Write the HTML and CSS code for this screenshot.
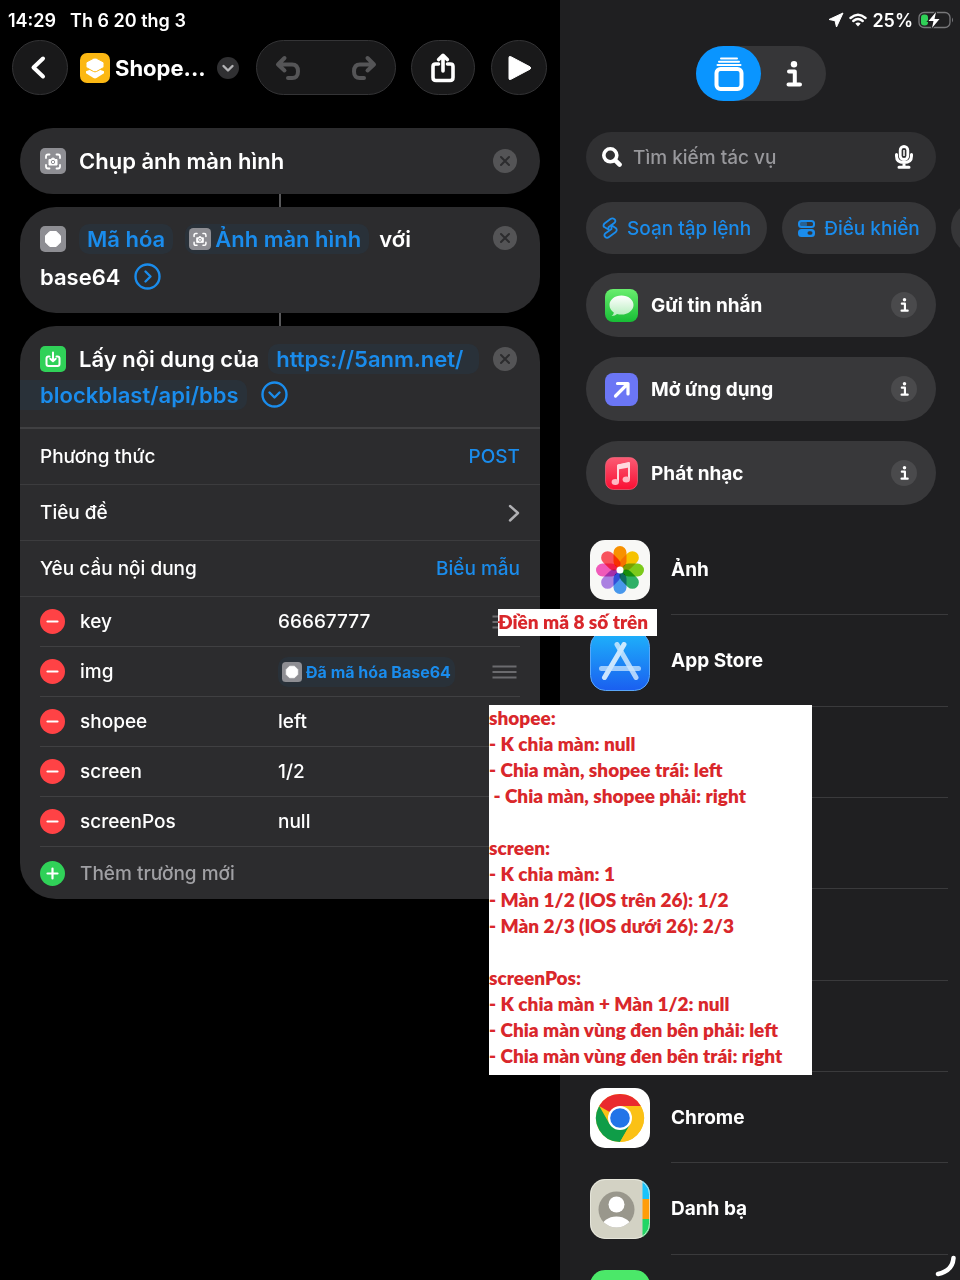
FILE: index.html
```
<!DOCTYPE html>
<html lang="vi">
<head>
    <meta charset="UTF-8" />
    <meta name="viewport" content="width=device-width, initial-scale=1.0" />
    <title>Shope...</title>
    <link rel="stylesheet" href="styles.css">
</head>
<body>
    <!-- Shared icons -->
    <svg class="sprite" aria-hidden="true">
        <symbol id="i-close" viewBox="0 0 24 24">
            <circle cx="12" cy="12" r="12" fill="#545456" />
            <path d="M8 8l8 8M16 8l-8 8" stroke="#2c2c2e" stroke-width="2" stroke-linecap="round" />
        </symbol>
        <symbol id="i-shot" viewBox="0 0 26 26">
            <rect width="26" height="26" rx="5" fill="#8e8e93" />
            <path d="M6 10V8.500Q6 6.500 8 6.500H9.500M16.500 6.500H18Q20 6.500 20 8.500V10M20 17V18.500Q20 20.500 18 20.500H16.500M9.500 20.500H8Q6 20.500 6 18.500V17" fill="none" stroke="#fff" stroke-width="1.800" stroke-linecap="round" />
            <path d="M9 11.500h2l1-1.300h2l1 1.300h2v5.500H9z" fill="#fff" stroke="#fff" stroke-linejoin="round" />
            <circle cx="13" cy="14" r="1.700" fill="none" stroke="#8e8e93" />
        </symbol>
        <symbol id="i-code" viewBox="0 0 26 26">
            <rect width="26" height="26" rx="5" fill="#8e8e93" />
            <path d="M9.800 5.500h6.400l4.300 4.300v6.400L16.200 20.500H9.800L5.500 16.200V9.800z" fill="#fff" stroke="#fff" stroke-linejoin="round" />
        </symbol>
        <symbol id="i-minus" viewBox="0 0 25 25">
            <circle cx="12.500" cy="12.500" r="12.500" fill="#ff4245" />
            <path d="M7.500 12.500h10" stroke="#fff" stroke-width="2.200" stroke-linecap="round" />
        </symbol>
        <symbol id="i-grip" viewBox="0 0 25 14">
            <path d="M.5 1.500h24M.5 7h24M.5 12.500h24" stroke="#6b6b6e" stroke-width="1.800" />
        </symbol>
        <symbol id="i-info" viewBox="0 0 16 26">
            <circle cx="8" cy="3.200" r="3.200" fill="currentColor" />
            <path d="M3 10.500h5.800v12.500M2.500 23.500h11.500" fill="none" stroke="currentColor" stroke-width="4" stroke-linecap="round" stroke-linejoin="round" />
        </symbol>
    </svg>

    <div class="screen">
        <!-- Shortcut editor -->
        <main class="editor">
            <div class="status">
                <span>14:29</span>
                <span>Th 6 20 thg 3</span>
            </div>

            <header class="toolbar">
                <button class="round-btn back" aria-label="Back">
                    <svg width="56" height="55" viewBox="0 0 56 55"><path d="M31 18.500l-9.500 9 9.500 9" fill="none" stroke="#fff" stroke-width="4" stroke-linecap="round" stroke-linejoin="round" /></svg>
                </button>
                <h1 class="title">
                    <svg width="30" height="30" viewBox="0 0 30 30">
                        <rect width="30" height="30" rx="7" fill="#fcb813" />
                        <path d="M15 15l9 3.300v2L16.500 25q-1.500.8-3 0L6 20.300v-2z" fill="#fff" />
                        <path d="M13.500 5.300q1.500-.7 3 0L23 8.700q1 .6 1 1.600v3q0 1-1 1.600l-6.500 3.600q-1.500.7-3 0L7 14.900q-1-.6-1-1.600v-3q0-1 1-1.600z" fill="#fff" stroke="#fcb813" />
                    </svg>
                    Shope...
                </h1>
                <button class="menu-btn" aria-label="Menu">
                    <svg width="22" height="22" viewBox="0 0 22 22"><path d="M6.500 9l4.500 4.500L15.500 9" fill="none" stroke="#b4b4b6" stroke-width="2.400" stroke-linecap="round" stroke-linejoin="round" /></svg>
                </button>
                <div class="history">
                    <button aria-label="Undo">
                        <svg width="26" height="26" viewBox="0 0 26 26"><path d="M9.500 3L3 9.500l6.500 6M4 9.500h13Q23 9.500 23 16.500T16.500 23H13" fill="none" stroke="#555557" stroke-width="4" stroke-linecap="round" stroke-linejoin="round" /></svg>
                    </button>
                    <button aria-label="Redo">
                        <svg width="26" height="26" viewBox="0 0 26 26"><path d="M16.500 3L23 9.500l-6.500 6M22 9.500H9Q3 9.500 3 16.500T9.500 23H13" fill="none" stroke="#555557" stroke-width="4" stroke-linecap="round" stroke-linejoin="round" /></svg>
                    </button>
                </div>
                <button class="round-btn share" aria-label="Share">
                    <svg width="26" height="30" viewBox="0 0 26 30"><path d="M8.500 11H5.500Q3 11 3 13.500V24.500Q3 27.500 6 27.500H20Q23 27.500 23 24.500V13.500Q23 11 20.500 11H17.500M13 18V3M8.700 6.500L13 2.300l4.300 4.200" fill="none" stroke="#fff" stroke-width="3.600" stroke-linecap="round" stroke-linejoin="round" /></svg>
                </button>
                <button class="round-btn play" aria-label="Play">
                    <svg width="26" height="28" viewBox="0 0 26 28"><path d="M3 3.500v21q0 1.500 1.500 1L24 15.200q1.500-1.200 0-2.400L4.500 2.500q-1.500-.5-1.500 1z" fill="#fff" stroke="#fff" stroke-linejoin="round" /></svg>
                </button>
            </header>

            <section class="actions">
                <article class="card">
                    <div class="card-head">
                        <p><svg class="app"><use href="#i-shot" /></svg>Chụp ảnh màn hình</p>
                        <button class="close" aria-label="Close"><svg><use href="#i-close" /></svg></button>
                    </div>
                </article>

                <div class="link"></div>

                <article class="card">
                    <div class="card-head two-line">
                        <p><svg class="app"><use href="#i-code" /></svg><span class="token">Mã hóa</span><span class="token with-icon"><svg><use href="#i-shot" /></svg>Ảnh màn hình</span>với<br />base64<button class="expand" aria-label="Expand"><svg viewBox="0 0 27 27"><circle cx="13.500" cy="13.500" r="12" /><path d="M11.500 8.500l5 5-5 5" /></svg></button></p>
                        <button class="close" aria-label="Close"><svg><use href="#i-close" /></svg></button>
                    </div>
                </article>

                <div class="link"></div>

                <article class="card">
                    <div class="card-head request">
                        <p><svg class="app" viewBox="0 0 26 26"><rect width="26" height="26" rx="5" fill="#30d158" /><path d="M9.500 10.500H8.500Q6.500 10.500 6.500 12.500V18Q6.500 20 8.500 20H17.500Q19.500 20 19.500 18V12.500Q19.500 10.500 17.500 10.500H16.500M13 6.500V15M10.300 12.700L13 15.300l2.700-2.600" fill="none" stroke="#fff" stroke-width="2" stroke-linecap="round" stroke-linejoin="round" /></svg>Lấy nội dung của<span class="token url">https://5anm.net/</span><br /><span class="token url-rest">blockblast/api/bbs</span><button class="expand" aria-label="Collapse"><svg viewBox="0 0 27 27"><circle cx="13.500" cy="13.500" r="12" /><path d="M8.500 11.500l5 5 5-5" /></svg></button></p>
                        <button class="close" aria-label="Close"><svg><use href="#i-close" /></svg></button>
                    </div>

                    <div class="option">
                        <label for="method">Phương thức</label>
                        <select id="method"><option>POST</option></select>
                    </div>
                    <div class="option">
                        <span>Tiêu đề</span>
                        <svg width="12" height="18" viewBox="0 0 12 18"><path d="M2 2l8 7-8 7.500" fill="none" stroke="#b0b0b3" stroke-width="2.400" stroke-linecap="round" stroke-linejoin="round" /></svg>
                    </div>
                    <div class="option">
                        <label for="body-type">Yêu cầu nội dung</label>
                        <select id="body-type"><option>Biểu mẫu</option></select>
                    </div>

                    <ul class="fields">
                        <li>
                            <button aria-label="Remove"><svg><use href="#i-minus" /></svg></button>
                            <input value="key" aria-label="Key" />
                            <input value="66667777" aria-label="Value" />
                            <svg class="grip"><use href="#i-grip" /></svg>
                        </li>
                        <li>
                            <button aria-label="Remove"><svg><use href="#i-minus" /></svg></button>
                            <input value="img" aria-label="Key" />
                            <span class="token small"><svg><use href="#i-code" /></svg>Đã mã hóa Base64</span>
                            <svg class="grip"><use href="#i-grip" /></svg>
                        </li>
                        <li>
                            <button aria-label="Remove"><svg><use href="#i-minus" /></svg></button>
                            <input value="shopee" aria-label="Key" />
                            <input value="left" aria-label="Value" />
                            <svg class="grip"><use href="#i-grip" /></svg>
                        </li>
                        <li>
                            <button aria-label="Remove"><svg><use href="#i-minus" /></svg></button>
                            <input value="screen" aria-label="Key" />
                            <input value="1/2" aria-label="Value" />
                            <svg class="grip"><use href="#i-grip" /></svg>
                        </li>
                        <li>
                            <button aria-label="Remove"><svg><use href="#i-minus" /></svg></button>
                            <input value="screenPos" aria-label="Key" />
                            <input value="null" aria-label="Value" />
                            <svg class="grip"><use href="#i-grip" /></svg>
                        </li>
                    </ul>
                    <button class="add">
                        <svg viewBox="0 0 25 25"><circle cx="12.500" cy="12.500" r="12.500" fill="#30d158" /><path d="M7.500 12.500h10M12.500 7.500v10" stroke="#fff" stroke-width="2.200" stroke-linecap="round" /></svg>
                        Thêm trường mới
                    </button>
                </article>
            </section>
        </main>

        <!-- Action library -->
        <aside class="library">
            <div class="status status-right">
                <svg width="16" height="16" viewBox="0 0 16 16"><path d="M15 1L1 7.500l6 1.200L8.500 15z" fill="#fff" stroke="#fff" stroke-linejoin="round" /></svg>
                <svg width="18" height="14" viewBox="0 0 18 14"><path d="M1.500 5Q9-1.500 16.500 5M4.300 8Q9 4 13.700 8" fill="none" stroke="#fff" stroke-width="2.400" stroke-linecap="round" /><path d="M9 13.500L6.300 10.500Q9 8.500 11.700 10.500z" fill="#fff" /></svg>
                <span>25%</span>
                <svg class="battery" width="36" height="18" viewBox="0 0 36 18">
                    <rect x="1" y="1.500" width="31" height="15" rx="5" fill="none" stroke="#77777a" stroke-width="1.300" />
                    <path d="M34 6.500q2 2.500 0 5z" fill="#77777a" />
                    <rect x="3" y="3.500" width="7" height="11" rx="3" fill="#30d158" />
                    <path d="M18 1L10.500 10H15.500L14 17L21.500 8H16.500z" fill="#fff" stroke="#1f1f21" stroke-width="2" paint-order="stroke" />
                </svg>
            </div>

            <div class="segmented">
                <button class="active" aria-label="Actions">
                    <svg width="30" height="34" viewBox="0 0 30 34"><rect x="2.500" y="12" width="25" height="20" rx="4" fill="none" stroke="#fff" stroke-width="4" /><path d="M7 1.500h16M5 4.800h20M3.500 8h23" stroke="#fff" stroke-width="2" stroke-linecap="round" /></svg>
                </button>
                <button aria-label="Info"><svg width="16" height="26"><use href="#i-info" /></svg></button>
            </div>

            <div class="search">
                <svg width="20" height="20" viewBox="0 0 20 20"><circle cx="8.300" cy="8.300" r="6.500" fill="none" stroke="#fff" stroke-width="3.600" /><path d="M13.300 13.300l4.300 4.300" stroke="#fff" stroke-width="4.500" stroke-linecap="round" /></svg>
                <input type="search" placeholder="Tìm kiếm tác vụ" aria-label="Tìm kiếm tác vụ" />
                <svg width="18" height="24" viewBox="0 0 18 24"><rect x="5.200" y="1.500" width="7.600" height="13" rx="3.800" fill="none" stroke="#fff" stroke-width="2.800" /><path d="M9 5v6" stroke="#fff" stroke-width="1.500" /><path d="M1.500 9.500v1.500Q1.500 17.500 9 17.500T16.500 11V9.500M9 18v3.500M4 22.300h10" fill="none" stroke="#fff" stroke-width="3" stroke-linecap="round" /></svg>
            </div>

            <div class="chips">
                <button>
                    <svg width="16" height="22" viewBox="0 0 16 22" fill="none" stroke="#1a8cec" stroke-width="1.800" stroke-linejoin="round"><path d="M6.500 12.500L1.800 9.800Q1 8 2.500 6.500L8.500 2Q10.500.8 12.500 2.200 14.300 4 12.500 5.800L6.500 10.200z" /><path d="M9.500 8.200L14 11.200Q15.500 13 13.800 15L7 20Q5 21.500 3.200 20 1.500 18 3.500 16.200L9.500 12z" /></svg>
                    Soạn tập lệnh
                </button>
                <button>
                    <svg width="17" height="17" viewBox="0 0 17 17"><rect x="1" y="1" width="15" height="6" rx="2.500" fill="none" stroke="#1a8cec" stroke-width="2" /><rect x="1" y="1" width="8" height="6" rx="2.500" fill="#1a8cec" opacity=".5" /><rect x="1" y="10" width="15" height="6" rx="2.500" fill="#1a8cec" stroke="#1a8cec" stroke-width="2" /><rect x="9.500" y="11.300" width="5" height="3.400" rx="1.700" fill="#363638" /></svg>
                    Điều khiển
                </button>
                <button></button>
            </div>

            <div class="suggestions">
                <div class="suggestion">
                    <svg width="33" height="33" viewBox="0 0 33 33">
                        <defs>
                            <linearGradient id="g-msg" x2="0" y2="1"><stop stop-color="#69ee6e" /><stop offset="1" stop-color="#17bd35" /></linearGradient>
                            <linearGradient id="g-bubble" x2="0" y2="1"><stop stop-color="#fff" /><stop offset="1" stop-color="#b6edbd" /></linearGradient>
                        </defs>
                        <rect width="33" height="33" rx="8" fill="url(#g-msg)" />
                        <path d="M16.500 6.500C9.800 6.500 4.500 10.700 4.500 16C4.500 19.200 6.200 21.700 8.800 23.400C8.800 25 7.800 26 6.500 27C8.800 27 10.800 26.200 12 25C13.400 25.400 15 25.600 16.500 25.600C23.200 25.600 28.500 21.300 28.500 16C28.500 10.700 23.200 6.500 16.500 6.500z" fill="url(#g-bubble)" />
                    </svg>
                    <span>Gửi tin nhắn</span>
                    <button aria-label="Info"><svg><use href="#i-info" /></svg></button>
                </div>
                <div class="suggestion">
                    <svg width="33" height="33" viewBox="0 0 33 33"><rect width="33" height="33" rx="8" fill="#6b76f5" /><path d="M10.500 23L22.500 11M12.500 10.500h10.500v10.500" fill="none" stroke="#fff" stroke-width="3.200" stroke-linecap="round" stroke-linejoin="round" /></svg>
                    <span>Mở ứng dụng</span>
                    <button aria-label="Info"><svg><use href="#i-info" /></svg></button>
                </div>
                <div class="suggestion">
                    <svg width="33" height="33" viewBox="0 0 33 33">
                        <defs><linearGradient id="g-music" x2="0" y2="1"><stop stop-color="#fb5b74" /><stop offset="1" stop-color="#fa0f33" /></linearGradient></defs>
                        <rect x=".5" y=".5" width="32" height="32" rx="8" fill="url(#g-music)" stroke="#fd6d82" stroke-opacity=".6" />
                        <path d="M13 25V8.500L24 6V22" fill="none" stroke="#ffd9df" stroke-width="2" stroke-linejoin="round" />
                        <path d="M13 7.500L24 5.500v5l-11 2z" fill="#ffd9df" />
                        <ellipse cx="10.300" cy="25" rx="3.700" ry="3" fill="#ffb9c4" />
                        <ellipse cx="21.300" cy="22.500" rx="3.700" ry="3" fill="#ffb9c4" />
                    </svg>
                    <span>Phát nhạc</span>
                    <button aria-label="Info"><svg><use href="#i-info" /></svg></button>
                </div>
            </div>

            <nav class="apps">
                <a href="#">
                    <svg viewBox="0 0 60 60">
                        <rect width="60" height="60" rx="15" fill="#f8f8f6" />
                        <g class="petals">
                            <rect x="23.500" y="6" width="13" height="22" rx="6.500" fill="#ff9500" />
                            <rect x="23.500" y="6" width="13" height="22" rx="6.500" fill="#fdc800" transform="rotate(45 30 30)" />
                            <rect x="23.500" y="6" width="13" height="22" rx="6.500" fill="#7fd01c" transform="rotate(90 30 30)" />
                            <rect x="23.500" y="6" width="13" height="22" rx="6.500" fill="#2fb56a" transform="rotate(135 30 30)" />
                            <rect x="23.500" y="6" width="13" height="22" rx="6.500" fill="#4a9cf5" transform="rotate(180 30 30)" />
                            <rect x="23.500" y="6" width="13" height="22" rx="6.500" fill="#b084ea" transform="rotate(225 30 30)" />
                            <rect x="23.500" y="6" width="13" height="22" rx="6.500" fill="#f75cc0" transform="rotate(270 30 30)" />
                            <rect x="23.500" y="6" width="13" height="22" rx="6.500" fill="#ff5560" transform="rotate(315 30 30)" />
                        </g>
                        <circle cx="30" cy="30" r="3.500" fill="#fff" />
                    </svg>
                    <span>Ảnh</span>
                </a>
                <a href="#">
                    <svg viewBox="0 0 60 60">
                        <defs><linearGradient id="g-store" x2="0" y2="1"><stop stop-color="#1eb4fb" /><stop offset="1" stop-color="#1a5ff0" /></linearGradient></defs>
                        <rect x=".5" y=".5" width="59" height="59" rx="15" fill="url(#g-store)" stroke="#5aa6f8" />
                        <g stroke="#e4f4ff" stroke-width="5" stroke-linecap="round" opacity=".88">
                            <path d="M34 13.500L14.500 46.500" /><path d="M27 13.500L46 46.500" opacity=".85" /><path d="M11.500 37.500h37" opacity=".75" />
                        </g>
                    </svg>
                    <span>App Store</span>
                </a>
                <a href="#"></a>
                <a href="#"></a>
                <a href="#"></a>
                <a href="#"></a>
                <a href="#">
                    <svg viewBox="0 0 60 60">
                        <rect width="60" height="60" rx="15" fill="#fff" />
                        <circle cx="30" cy="30" r="24" fill="#fbc116" />
                        <path d="M30 30L9.200 18A24 24 0 0 1 50.800 18z" fill="#ea2a2e" />
                        <path d="M9.200 18A24 24 0 0 0 30 54L40.400 36 19.600 36z" fill="#0f9d48" />
                        <path d="M30 18H50.800A24 24 0 0 1 30 54L40.400 36z" fill="#fbc116" />
                        <circle cx="30" cy="30" r="12" fill="#fff" />
                        <circle cx="30" cy="30" r="9.800" fill="#2274e8" />
                    </svg>
                    <span>Chrome</span>
                </a>
                <a href="#">
                    <svg viewBox="0 0 60 60">
                        <defs>
                            <clipPath id="c-tile"><rect width="60" height="60" rx="15" /></clipPath>
                            <clipPath id="c-face"><circle cx="26.500" cy="30.500" r="18" /></clipPath>
                        </defs>
                        <g clip-path="url(#c-tile)">
                            <path d="M0 0h60v60H0z" fill="#d3d2c4" />
                            <path d="M52.500 0H60v20h-7.500z" fill="#19c3fb" /><path d="M52.500 20H60v20h-7.500z" fill="#ff9d0a" /><path d="M52.500 40H60v20h-7.500z" fill="#22d565" />
                            <circle cx="26.500" cy="30.500" r="18" fill="#99978c" />
                            <g clip-path="url(#c-face)" fill="#fff"><circle cx="26.500" cy="25.500" r="8" /><ellipse cx="26.500" cy="49" rx="15" ry="11.500" /></g>
                        </g>
                        <rect x=".5" y=".5" width="59" height="59" rx="15" fill="none" stroke="#eeeee6" stroke-opacity=".7" />
                    </svg>
                    <span>Danh bạ</span>
                </a>
                <a href="#">
                    <svg viewBox="0 0 60 60"><rect width="60" height="60" rx="15" fill="#4be869" /></svg>
                </a>
            </nav>
        </aside>

        <!-- Notes laid over both panes -->
        <div class="note note-key">Điền mã 8 số trên</div>
        <div class="note note-fields">shopee:
- K chia màn: null
- Chia màn, shopee trái: left
 - Chia màn, shopee phải: right

screen:
- K chia màn: 1
- Màn 1/2 (IOS trên 26): 1/2
- Màn 2/3 (IOS dưới 26): 2/3

screenPos:
- K chia màn + Màn 1/2: null
- Chia màn vùng đen bên phải: left
- Chia màn vùng đen bên trái: right</div>
        <svg class="corner" width="22" height="22" viewBox="0 0 22 22"><path d="M18.500 3Q17.500 16 3 19" fill="none" stroke="#fff" stroke-width="4.500" stroke-linecap="round" /></svg>
    </div>
</body>
</html>
```
FILE: styles.css
```
* {
    box-sizing: border-box;
    margin: 0;
    padding: 0;
}

body {
    background-color: #000;
    color: #fff;
    font-family: 'Inter', sans-serif;
}

button, input, select {
    font: inherit;
    color: inherit;
    background: none;
    border: none;
}

svg {
    display: block;
    flex: none;
}

.sprite {
    position: absolute;
    width: 0;
    height: 0;
}

.screen {
    position: relative;
    display: grid;
    grid-template-columns: 7fr 5fr;
    height: 100vh;
    overflow: hidden;
}

.editor,
.library {
    min-width: 0;
}

/* Status bar */
.status {
    display: flex;
    align-items: center;
    gap: 14px;
    height: 40px;
    padding: 0 8px;
    font-size: 18px;
    font-weight: 600;
}

.status-right {
    justify-content: flex-end;
    gap: 5px;
    padding-right: 6px;
}

/* Toolbar */
.toolbar {
    display: flex;
    align-items: center;
    height: 55px;
    padding: 0 13px 0 12px;
}

.round-btn {
    display: flex;
    align-items: center;
    justify-content: center;
    flex: none;
    width: 56px;
    height: 55px;
    border: 1px solid #343436;
    border-radius: 28px;
    background: #19191a;
}

.title {
    display: flex;
    align-items: center;
    gap: 5px;
    margin-left: 12px;
    font-size: 22px;
    font-weight: 700;
}

.menu-btn {
    margin-left: auto;
    border-radius: 50%;
    background: #303032;
}

.history {
    display: flex;
    align-items: center;
    justify-content: space-between;
    flex: none;
    width: 140px;
    height: 55px;
    margin: 0 15px 0 17px;
    padding: 0 18px;
    border: 1px solid #343436;
    border-radius: 28px;
    background: #19191a;
}

.share {
    width: 64px;
    margin-right: 16px;
}

/* Action cards */
.actions {
    padding: 33px 20px 0;
}

.card {
    border-radius: 36px;
    background: #2c2c2e;
    overflow: hidden;
}

.link {
    width: 2px;
    height: 13px;
    margin: 0 auto;
    background: #58585a;
}

.card-head {
    display: flex;
    align-items: flex-start;
    padding: 15px 23px 15px 20px;
    font-size: 22px;
    font-weight: 600;
    line-height: 36px;
}

.card-head p {
    flex: 1;
    white-space: nowrap;
}

.card-head p svg {
    display: inline-block;
    vertical-align: middle;
}

.card-head.two-line {
    padding-top: 13px;
    padding-bottom: 17px;
    line-height: 38px;
}

.card-head.request {
    padding-bottom: 14px;
    border-bottom: 2px solid #404042;
}

.card-head .app {
    width: 26px;
    height: 26px;
    margin: -4px 13px 0 0;
}

.close {
    margin-top: 6px;
}

.close svg {
    width: 24px;
    height: 24px;
}

.token {
    display: inline-block;
    padding: 0 8px;
    border-radius: 10px;
    background: #293139;
    color: #1a8cec;
    line-height: 30px;
}

.token.with-icon {
    margin: 0 10px 0 12px;
    padding-left: 4px;
}

.with-icon svg {
    width: 22px;
    height: 22px;
    margin: -4px 4px 0 0;
}

.token.url {
    margin-left: 9px;
    padding-right: 16px;
}

.token.url-rest {
    margin-left: -20px;
    padding-left: 20px;
    border-radius: 0 10px 10px 0;
}

.expand {
    margin: -6px 0 0 14px;
    line-height: 0;
    vertical-align: middle;
}

.expand svg {
    width: 27px;
    height: 27px;
    fill: none;
    stroke: #1a8cec;
    stroke-width: 2.4;
    stroke-linecap: round;
    stroke-linejoin: round;
}

.option {
    display: flex;
    align-items: center;
    justify-content: space-between;
    height: 56px;
    padding: 0 20px;
    border-bottom: 1px solid #3c3c3e;
    font-size: 19px;
    font-weight: 500;
}

.option select {
    appearance: none;
    color: #1a8cec;
    text-align-last: right;
}

.fields {
    padding: 0 20px;
    list-style: none;
}

.fields li {
    display: grid;
    grid-template-columns: 40px 198px 1fr 28px;
    align-items: center;
    height: 50px;
    border-bottom: 1px solid #404042;
    font-size: 19px;
    font-weight: 500;
}

.fields input {
    min-width: 0;
    width: 100%;
}

.fields button svg,
.add svg {
    width: 25px;
    height: 25px;
}

.fields .grip {
    width: 25px;
    height: 14px;
}

.token.small {
    display: flex;
    align-items: center;
    justify-self: start;
    gap: 4px;
    padding: 0 4px;
    font-size: 16px;
    font-weight: 700;
}

.small svg {
    width: 20px;
    height: 20px;
}

.add {
    display: flex;
    align-items: center;
    gap: 15px;
    height: 52px;
    padding: 0 20px;
    color: #a0a0a4;
    font-size: 19px;
    font-weight: 500;
}

/* Library pane */
.library {
    background: #1f1f21;
}

.segmented {
    display: flex;
    width: 130px;
    height: 55px;
    margin: 6px auto 0 136px;
    border-radius: 28px;
    background: #363638;
}

.segmented button {
    display: flex;
    align-items: center;
    justify-content: center;
    flex: 1;
    border-radius: 28px;
}

.segmented .active {
    background: #0a95ff;
}

.search {
    display: flex;
    align-items: center;
    gap: 11px;
    height: 50px;
    margin: 31px 24px 0 26px;
    padding: 0 23px 0 16px;
    border-radius: 25px;
    background: #303032;
}

.search input {
    flex: 1;
    min-width: 0;
    font-size: 19px;
    font-weight: 500;
}

.search input::placeholder {
    color: #98989c;
}

.chips {
    display: flex;
    gap: 15px;
    margin: 20px 0 0 26px;
    overflow: hidden;
}

.chips button {
    display: flex;
    align-items: center;
    flex: none;
    gap: 9px;
    height: 52px;
    min-width: 60px;
    padding: 0 16px;
    border-radius: 26px;
    background: #363638;
    color: #1a8cec;
    font-size: 19px;
    font-weight: 500;
}

.suggestions {
    display: grid;
    gap: 20px;
    margin: 19px 24px 0 26px;
}

.suggestion {
    display: flex;
    align-items: center;
    gap: 13px;
    height: 64px;
    padding: 0 19px;
    border-radius: 32px;
    background: #38383a;
    font-size: 19px;
    font-weight: 700;
}

.suggestion span {
    flex: 1;
}

.suggestion button {
    display: flex;
    align-items: center;
    justify-content: center;
    width: 26px;
    height: 26px;
    border-radius: 50%;
    background: #4a4a4c;
}

.suggestion button svg {
    width: 9px;
    height: 14px;
}

.apps {
    display: grid;
    grid-auto-rows: 1fr;
    min-height: 822px;
    margin: 19px 12px 0 30px;
}

.apps a {
    display: grid;
    grid-template-columns: 60px 1fr;
    gap: 21px;
    align-items: center;
    color: #fff;
    font-size: 19px;
    font-weight: 700;
    text-decoration: none;
    background: linear-gradient(#3a3a3c, #3a3a3c) 81px 100% / 100% 1px no-repeat;
}

.petals rect {
    mix-blend-mode: multiply;
}

/* Notes */
.note {
    position: absolute;
    background: #fff;
    color: #d9272b;
    font-family: 'Lato', sans-serif;
    font-size: 19px;
    font-weight: 800;
    line-height: 26px;
    white-space: pre;
}

.note-key {
    top: 609px;
    left: 498px;
    min-width: 159px;
    padding-bottom: 1px;
}

.note-fields {
    top: 705px;
    left: 489px;
    min-width: 323px;
    padding-bottom: 6px;
}

.corner {
    position: absolute;
    right: 3px;
    bottom: 3px;
}
```
